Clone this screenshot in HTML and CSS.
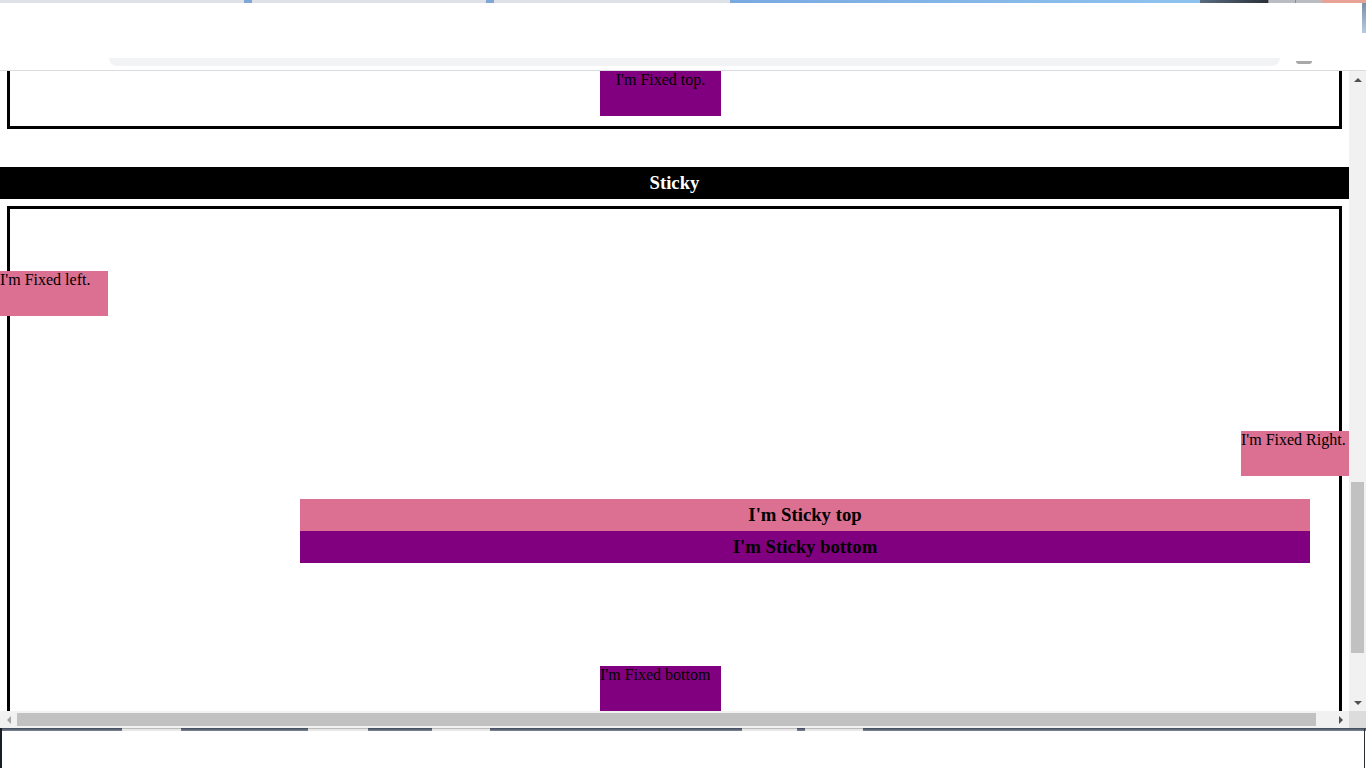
FILE: index.html
```html
<!DOCTYPE html>
<html>
<head>
<meta charset="utf-8">
<link rel="stylesheet" href="styles.css">
</head>
<body>
<div class="chrome">
  <div class="tabstrip">
    <div class="ts-grey1"></div>
    <div class="ts-notch"></div>
    <div class="ts-grey2"></div>
    <div class="ts-notch"></div>
    <div class="ts-grey3"></div>
    <div class="ts-blue"></div>
    <div class="ts-dark"></div>
    <div class="ts-btn"></div>
    <div class="ts-btn"></div>
    <div class="ts-red"></div>
  </div>
  <div class="toolbar">
    <div class="omnibox"></div>
    <div class="tb-icon"></div>
  </div>
</div>
<div class="window">
  <div class="viewport">
    <div class="box1"></div>
    <h3 class="bar">Sticky</h3>
    <div class="box2">
      <h3 class="sticky sticky-top">I'm Sticky top</h3>
      <h3 class="sticky sticky-bottom">I'm Sticky bottom</h3>
    </div>
    <div class="fixed fixed-top">I'm Fixed top.</div>
    <div class="fixed fixed-left">I'm Fixed left.</div>
    <div class="fixed fixed-right">I'm Fixed Right.</div>
    <div class="fixed fixed-bottom">I'm Fixed bottom</div>
  </div>
  <div class="vscroll">
    <div class="arrow-up"></div>
    <div class="vtrack"><div class="vthumb"></div></div>
    <div class="arrow-down"></div>
  </div>
</div>
<div class="hrow">
  <div class="hscroll">
    <div class="arrow-left"></div>
    <div class="htrack"><div class="hthumb"></div></div>
    <div class="arrow-right"></div>
  </div>
  <div class="corner"></div>
</div>
<div class="taskbar">
  <div class="tk-line">
    <span class="tk-tab t1"></span>
    <span class="tk-tab t2"></span>
    <span class="tk-tab t3"></span>
    <span class="tk-tab t4"></span>
    <span class="tk-tab t5"></span>
  </div>
</div>
</body>
</html>
```
FILE: styles.css
```css
html, body {
  margin: 0;
  padding: 0;
  width: 1366px;
  height: 768px;
  overflow: hidden;
  background: #fff;
  font-family: "Liberation Serif", "Times New Roman", serif;
  font-size: 16px;
}

/* browser chrome remnants */
.chrome {
  height: 71px;
  display: flex;
  flex-direction: column;
  background: #fff;
}
.tabstrip {
  height: 3px;
  display: flex;
}
.ts-grey1 { width: 244px; background: #dee1e6; }
.ts-notch { width: 8px; background: #7fa6d6; }
.ts-grey2 { width: 234px; background: #dee1e6; }
.ts-grey3 { width: 236px; background: #dee1e6; }
.ts-blue { width: 470px; background: linear-gradient(90deg, #7aa9e0, #8fc3ef); }
.ts-dark { width: 68px; background: linear-gradient(90deg, #5a6c80, #2a3038); }
.ts-btn { width: 26px; background: #b9bcc0; border-left: 1px solid #8a8d90; }
.ts-red { flex: 1; background: #e6a396; }
.toolbar {
  flex: 1;
  display: flex;
  align-items: flex-end;
  border-bottom: 1px solid #dadce0;
  padding-left: 109px;
  padding-right: 54px;
  gap: 16px;
  position: relative;
}
.toolbar::after {
  content: "";
  position: absolute;
  right: 0;
  top: 0;
  width: 4px;
  height: 30px;
  background: linear-gradient(180deg, #7b8fa8, #b8cbe0);
}
.omnibox {
  width: 1180px;
  height: 8px;
  margin-bottom: 4px;
  background: #f1f3f4;
  border-radius: 0 0 10px 10px;
}
.tb-icon {
  width: 16px;
  height: 3px;
  margin-bottom: 6px;
  background: #a8a8a8;
  border-radius: 0 0 8px 8px;
}

/* main window */
.window {
  display: flex;
  height: 640px;
}
.viewport {
  width: 1349px;
  height: 640px;
  position: relative;
  overflow: hidden;
}
.box1 {
  margin: 0 7px;
  height: 55px;
  border: 3px solid #000;
  border-top: none;
}
.bar {
  margin: 38px 0 7px;
  height: 32px;
  line-height: 32px;
  background: #000;
  color: #fff;
  text-align: center;
  font-size: 18.72px;
  font-weight: bold;
}
.box2 {
  margin: 0 7px;
  height: 600px;
  border: 3px solid #000;
  border-bottom: none;
  padding-top: 290px;
  padding-left: 290px;
}
.sticky {
  margin: 0;
  width: 1010px;
  height: 32px;
  line-height: 32px;
  text-align: center;
  font-size: 18.72px;
  font-weight: bold;
  color: #000;
}
.sticky-top { background: #db7093; }
.sticky-bottom { background: #800080; }

.fixed {
  position: absolute;
  height: 45px;
  line-height: 18px;
  color: #000;
}
.fixed-top {
  left: 600px;
  top: 0;
  width: 121px;
  background: #800080;
  text-align: center;
}
.fixed-bottom {
  left: 600px;
  top: 595px;
  width: 121px;
  background: #800080;
}
.fixed-left {
  left: 0;
  top: 200px;
  width: 108px;
  background: #db7093;
}
.fixed-right {
  left: 1241px;
  top: 360px;
  width: 108px;
  background: #db7093;
}

/* vertical scrollbar */
.vscroll {
  width: 17px;
  background: #f1f1f1;
  display: flex;
  flex-direction: column;
}
.arrow-up, .arrow-down {
  height: 17px;
  display: flex;
  align-items: center;
  justify-content: center;
}
.arrow-up::before {
  content: "";
  border-left: 4px solid transparent;
  border-right: 4px solid transparent;
  border-bottom: 4px solid #505050;
}
.arrow-down::before {
  content: "";
  border-left: 4px solid transparent;
  border-right: 4px solid transparent;
  border-top: 4px solid #505050;
}
.vtrack {
  flex: 1;
  padding-top: 394px;
  display: flex;
  justify-content: center;
}
.vthumb {
  width: 13px;
  height: 171px;
  background: #c1c1c1;
}

/* horizontal scrollbar */
.hrow {
  display: flex;
  height: 17px;
}
.hscroll {
  width: 1349px;
  background: #f1f1f1;
  display: flex;
}
.arrow-left, .arrow-right {
  width: 17px;
  display: flex;
  align-items: center;
  justify-content: center;
}
.arrow-left::before {
  content: "";
  border-top: 4px solid transparent;
  border-bottom: 4px solid transparent;
  border-right: 4px solid #a3a3a3;
}
.arrow-right::before {
  content: "";
  border-top: 4px solid transparent;
  border-bottom: 4px solid transparent;
  border-left: 4px solid #505050;
}
.htrack {
  flex: 1;
  display: flex;
  align-items: center;
}
.hthumb {
  width: 1299px;
  height: 13px;
  background: #c1c1c1;
}
.corner {
  flex: 1;
  background: #dcdcdc;
}

/* taskbar remnant */
.taskbar {
  height: 40px;
  background: #fff;
  border-left: 2px solid #1a1f25;
  box-sizing: border-box;
  position: relative;
}
.taskbar::after {
  content: "";
  position: absolute;
  right: 1px;
  top: 1px;
  width: 1px;
  height: 39px;
  background: #2a2f35;
}
.tk-line {
  height: 3px;
  background: linear-gradient(180deg, #3c4654, #7d8a99);
  position: relative;
}
.tk-tab {
  position: absolute;
  top: 0;
  height: 3px;
  background: #e8e8e8;
  border-top: 1px solid #bbb;
  box-sizing: border-box;
}
.t1 { left: 120px; width: 59px; }
.t2 { left: 306px; width: 60px; }
.t3 { left: 430px; width: 58px; }
.t4 { left: 740px; width: 55px; }
.t5 { left: 803px; width: 58px; }
```
